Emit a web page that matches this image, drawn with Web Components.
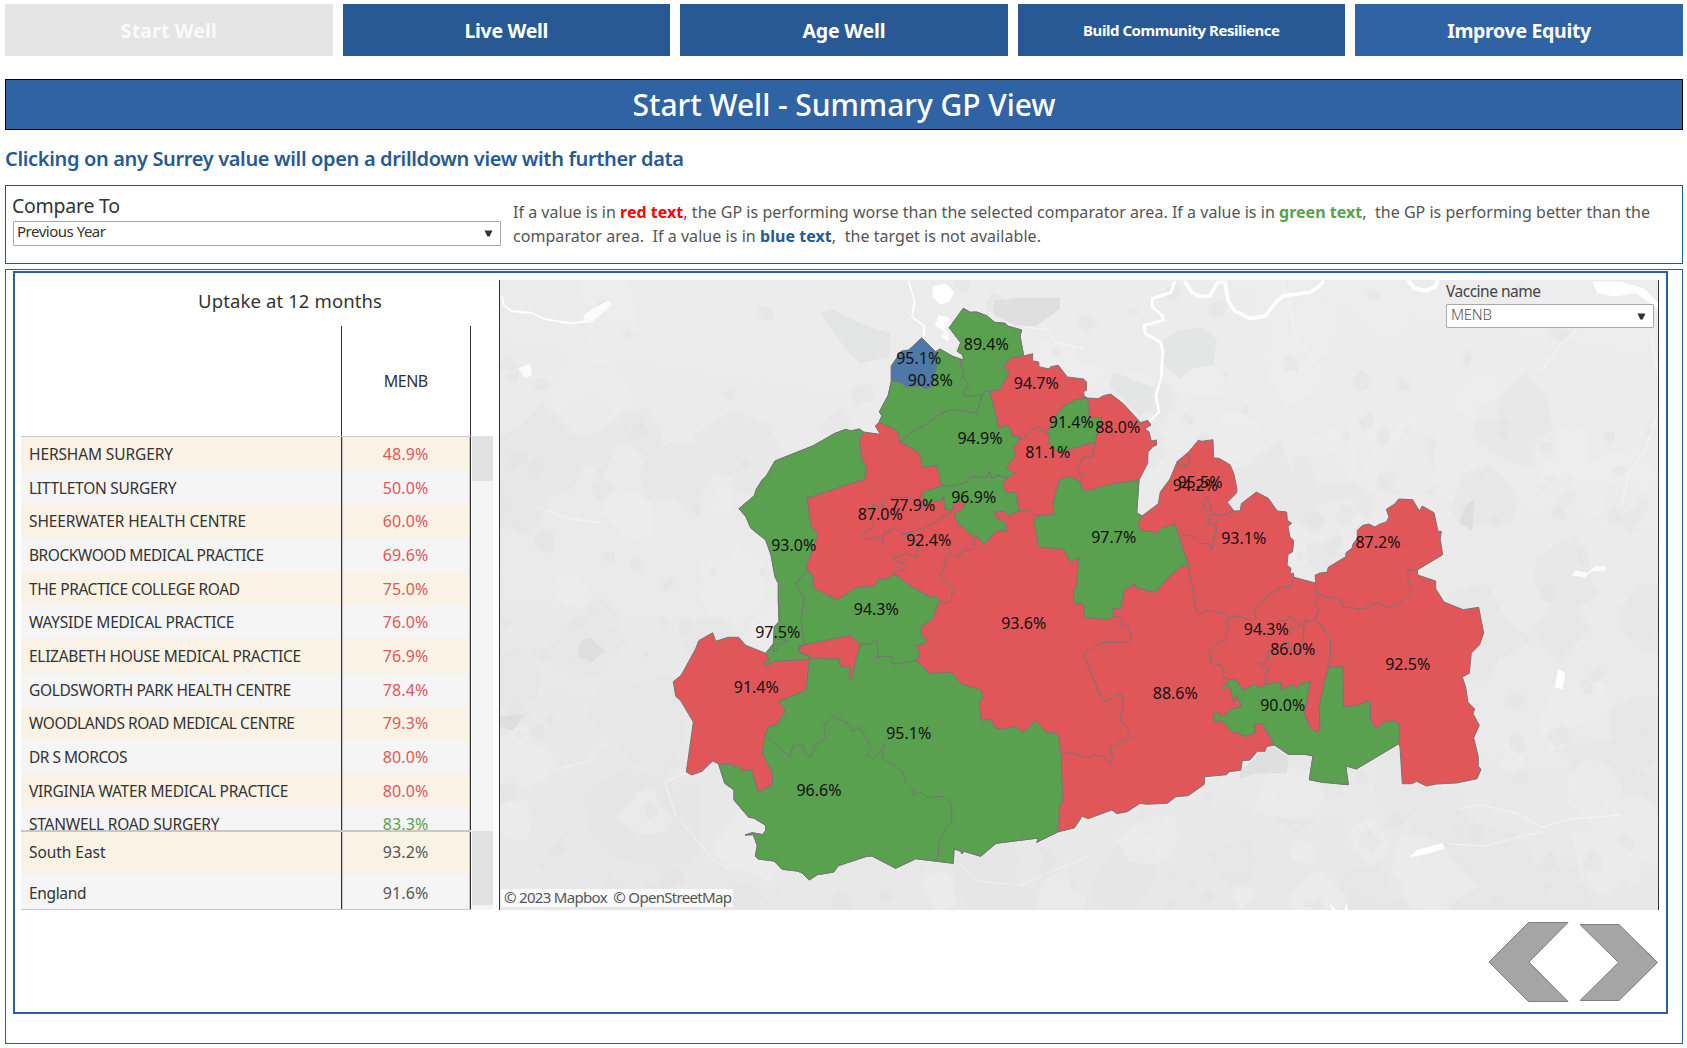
<!DOCTYPE html>
<html lang="en">
<head>
<meta charset="utf-8">
<title>Start Well - Summary GP View</title>
<style>
body{margin:0;background:#fff;font-family:"Noto Sans","Open Sans",sans-serif;color:#333}
</style>
</head>
<body>
<gp-dashboard></gp-dashboard>
<script>
const define = (name, html, setup) => customElements.define(name, class extends HTMLElement {
  connectedCallback() {
    if (this.shadowRoot) return;
    const root = this.attachShadow({ mode: 'open' });
    root.innerHTML = typeof html === 'function' ? html(this) : html;
    if (setup) setup(this, root);
  }
});

/* Text that spaces its letters to span a given width. */
define('fit-text', `<style>:host{display:inline-block;white-space:pre}</style><slot></slot>`, el => {
  const w = +el.getAttribute('w');
  const natural = el.getBoundingClientRect().width;
  const n = el.textContent.length;
  if (w && natural) {
    const s = (w - natural) / (n - 1);
    el.style.letterSpacing = s.toFixed(3) + 'px';
    el.style.marginRight = (-s).toFixed(3) + 'px';
  }
});

define('nav-tab', `<style>
:host{flex:1 1 0;display:flex;align-items:center;justify-content:center;background:#285994;color:#fff;font-size:19.5px;font-weight:700;line-height:20px;padding-top:1px}
:host([off]){background:#e5e5e5;color:#fafafa}
:host([light]){background:#2f63a3}
:host([small]){font-size:15px;padding-top:0}
</style><slot></slot>`);

define('page-title', `<style>
:host{display:flex;box-sizing:border-box;height:51px;margin-top:23px;padding-top:1px;border:1px solid #000;background:#2f63a3;color:#fff;align-items:center;justify-content:center;font-size:30px;font-weight:500;line-height:30px}
</style><slot></slot>`);

define('select-box', `<style>
:host{display:flex;box-sizing:border-box;align-items:center;justify-content:space-between;background:#fff;border:1px solid #a9a9a9;border-radius:1px}
slot{display:block;margin-top:-3px}
svg{display:block;flex:none;margin-right:7px}
</style><div style="margin-top:-2px"><slot></slot></div><svg width="9" height="7" viewBox="0 0 9 7"><path d="M.5.5h8L5.6 6.5H3.4z" fill="#333"/></svg>`);

define('compare-bar', `<style>
:host{display:flex;box-sizing:border-box;height:79px;border:1px solid #125f9b}
.l{width:490px;padding:10px 0 0 6px}
.h{font-size:19.5px;line-height:20px;margin-bottom:5px}
select-box{width:488px;height:25px;font-size:15px;padding-left:3px;margin-left:1px}
.r{padding:14px 0 0 11px;font-size:16px;line-height:24px;color:#555;white-space:nowrap}
b{font-weight:700}
</style>
<div class="l"><div class="h"><fit-text w="108">Compare To</fit-text></div>
<select-box><fit-text w="89">Previous Year</fit-text></select-box></div>
<div class="r"><div><fit-text w="1137">If a value is in <b style="color:#f00">red text</b>, the GP is performing worse than the selected comparator area. If a value is in <b style="color:#59a14f">green text</b>,  the GP is performing better than the</fit-text></div>
<div><fit-text w="528">comparator area.  If a value is in <b style="color:#285994">blue text</b>,  the target is not available.</fit-text></div></div>`);

define('table-row', el => `<style>
:host{display:grid;grid-template-columns:320px 130px;height:33.7px;background:#f5f5f5;font-size:16px;line-height:16px}
:host([odd]){background:#faf3e5}
:host([tall]){height:40.5px}
span{display:flex;align-items:center;padding-left:8px;font-size:15.5px}
b{display:flex;align-items:center;justify-content:center;font-weight:400;box-sizing:border-box;padding-right:1px;border-left:1px solid #333;border-right:1px solid #333;box-shadow:inset 1px 0 #c4c4c4,inset -1px 0 #c4c4c4;color:${el.getAttribute('c')}}
</style><span><fit-text w="${el.getAttribute('w') - 1}">${el.getAttribute('name')}</fit-text></span><b><fit-text w="45.5">${el.getAttribute('v')}</fit-text></b>`);

const R = '#e15759', G = '#59a14f', K = '#555';
const ROWS = [
  ['HERSHAM SURGERY','48.9%',145,R],['LITTLETON SURGERY','50.0%',148.5,R],['SHEERWATER HEALTH CENTRE','60.0%',218,R],
  ['BROCKWOOD MEDICAL PRACTICE','69.6%',236,R],['THE PRACTICE COLLEGE ROAD','75.0%',212,R],['WAYSIDE MEDICAL PRACTICE','76.0%',206.5,R],
  ['ELIZABETH HOUSE MEDICAL PRACTICE','76.9%',273,R],['GOLDSWORTH PARK HEALTH CENTRE','78.4%',263,R],
  ['WOODLANDS ROAD MEDICAL CENTRE','79.3%',267,R],['DR S MORCOS','80.0%',99.5,R],['VIRGINIA WATER MEDICAL PRACTICE','80.0%',260.5,R],
  ['STANWELL ROAD SURGERY','83.3%',191.5,G]];
const TOTALS = [['South East','93.2%',77.5,K],['England','91.6%',58.5,K]];
const rows = (list, extra) => list.map(([n, v, w, c], i) =>
  `<table-row name="${n}" v="${v}" w="${w}" c="${c}" ${extra} ${i % 2 ? '' : 'odd'}></table-row>`).join('');

define('uptake-table', `<style>
:host{display:block;box-sizing:border-box;width:484px;padding-left:6px}
.t{height:53px;padding:2px 0 0 60px;box-sizing:border-box;display:flex;align-items:center;justify-content:center;font-size:18.5px;line-height:18px}
.g{display:flex;gap:1px}
.m{width:450px}
.h{display:grid;grid-template-columns:320px 130px;height:110px;font-size:16px}
.h b{font-weight:400;display:flex;align-items:center;justify-content:center;border-left:1px solid #333;border-right:1px solid #333;box-sizing:border-box}
.body{height:393px;overflow:hidden;border-top:1px solid #c8c8c8}
.foot{height:77px;overflow:hidden;border-top:2px solid #c8c8c8;border-bottom:1px solid #c8c8c8}
.s{width:21px;padding-top:110px}
.s div{background:#f5f5f5}
.s i{display:block;background:#e1e1e1}
</style>
<div class="t"><fit-text w="184">Uptake at 12 months</fit-text></div>
<div class="g"><div class="m"><div class="h"><span></span><b><fit-text w="44.5">MENB</fit-text></b></div>
<div class="body">${rows(ROWS, '')}</div><div class="foot">${rows(TOTALS, 'tall')}</div></div>
<div class="s"><div style="height:395px"><i style="height:45px"></i></div><div style="height:79px"><i style="height:74px"></i></div></div></div>`);

/* Map geometry: each frame is [left, top, x scale, y scale]; a path switches frame by its letter. */
const FRAMES = { A:[660,290,3,3], B:[660,600,3,3], C:[980,290,3,3], D:[1040,560,3,3], E:[1270,470,3,3], F:[496,276,1.3333,2.43] };
function path(src, close) {
  let f, first = true, d = '';
  for (const tok of src.trim().split(/\s+/)) {
    if (FRAMES[tok]) { f = FRAMES[tok]; continue; }
    const [x, y] = tok.split(',').map(Number);
    d += (first ? 'M' : 'L') + (f[0] + x / f[2]).toFixed(1) + ' ' + (f[1] + y / f[3]).toFixed(1);
    first = false;
  }
  return d + (close ? 'Z' : '');
}
const OUTLINE = `A 868,113 910,55 930,67 950,66 980,77 1004,97 1035,100 1045,109 1085,120 1080,138 1091,198
C 158,191 157,212 176,216 177,230 207,237 212,230 235,226 262,261 310,267 320,276 319,302 311,303 312,317 322,324 355,326 370,317 392,312 430,341 482,398 503,391 513,405 494,417 507,425 514,453 529,450 530,465 518,470 504,487 503,520 477,570 470,668 486,678 535,641 541,606 570,567 592,514 625,487 655,451 665,454 699,449 701,504 717,505 750,524 761,550 771,597 770,608 742,637 762,663 781,662 784,641 829,606 865,625 892,663 920,666 922,691 935,700 924,709 930,742 941,751 938,785 924,793 921,825 933,835 930,852 940,849 942,862
E 137,339 135,316 150,309 171,307 175,292 227,260 228,248 246,235 249,222 262,205 262,181 278,166 297,162 314,171 332,161 349,156 357,141 349,118 375,101 386,87 428,89 448,123 457,108 492,128 504,184 514,184 511,208 518,254 442,300 443,315 497,333 497,356 522,396 580,419 626,412 641,489 629,524 604,549 598,610 577,621 587,652 594,697 614,717 609,731 628,766 611,803 625,860 625,889 633,898 621,926 560,939 500,942 469,948 440,934 425,941 397,941 390,832 386,821 259,897 227,886 235,944 155,936 118,929 129,857 105,853 55,853 25,830
D 703,555 680,560 675,574 652,574 630,600 607,602 602,631 567,635 560,644 494,650 493,673 445,707 408,710 382,730 318,733 300,730 262,755 231,761 215,750 145,776 127,769 103,804 53,816
B 1193,696 1130,727 1136,714 1008,730 962,769 912,754 905,762 903,754 882,747 880,790 767,776 707,805 636,768 620,769 535,797 521,816 472,824 448,840 427,819 412,813 366,808 342,783 295,777 286,768 292,737 280,704 255,705 277,698 308,704 318,690 316,675 281,654 266,652 222,600 222,570 194,550 176,492 158,483 126,514 95,525 79,516 100,366 62,302 47,289 40,245 64,225 107,146 116,122 158,98 167,124 204,112 236,112 257,136 317,160 340,131 343,80 357,65 355,0
A 355,880 345,860 333,795 317,750 272,714 258,680 237,656 283,617 289,598 306,571 320,556 345,513 460,467 525,430 558,418 573,423 598,417 611,426 661,433 646,408 657,397 666,377 658,366 685,315 694,274 694,228 724,184 746,180 785,144 827,185 840,177 876,198 911,210 908,195 892,184 902,158`;
const GREENS = [
`A 868,113 910,55 930,67 950,66 980,77 1004,97 1035,100 1045,109 1085,120 1080,138 1091,198 1055,203 1044,213 1030,232 1048,247 1035,270 1019,299 992,303 975,303 966,316 914,319 911,304 926,283 905,257 913,242 900,222 905,210 911,210 908,195 892,184 902,158`,
`A 827,185 840,177 876,198 905,210 900,222 913,242 905,257 926,283 911,304 914,319 966,316 951,370 880,359 845,369 800,402 760,424 720,455 711,422 657,397 666,377 658,366 685,315 694,274 728,240`,
`A 720,455 760,424 800,402 845,369 880,359 951,370 966,316 975,303 990,307 1012,390 1015,416 1041,405 1055,421 1055,437 1080,440 1075,454 1060,474 1066,490 1058,512 1047,517 1040,536 1064,549 1045,563 1010,557 997,566 988,544 981,562 929,562 921,576 886,588 844,586 838,552 828,527 788,532 777,488`,
`A 844,588 886,588 921,576 929,562 981,562 988,544 997,566 1010,557 1045,563 1027,580 1038,606 1068,608 1077,662 1045,677 1032,664 1004,666 1005,680 1034,697 1042,722 1008,723 973,764 952,738 936,738 906,707 893,705 893,692 883,681 884,670 905,660 921,633 882,640 878,660 855,658 851,619 841,633 805,636 795,655 788,607`,
`C 238,571 268,558 300,576 309,600 335,600 380,585 477,570 470,668 486,678 472,704 487,724 516,724 524,733 547,713 586,704 624,822 600,832 563,865 527,907 473,895 464,883 433,900 422,958 401,954 400,977 388,989 312,982 312,946 300,938 289,946 281,928 281,902 292,885 290,868 297,803 270,815 252,778 176,771 161,688 182,676 223,673 219,640`,
`C 322,324 328,360 325,384 366,382 345,456 236,487 206,460 208,434 200,430 229,375 253,347 285,329`,
`A 237,656 283,617 289,598 306,571 320,556 345,513 460,467 525,430 558,418 573,423 598,417 611,426 599,447 602,498 620,533 614,568 560,585 441,625 453,706 473,734 440,828 444,842 407,881 433,927 424,980 B 424,50 428,110 438,134 417,140 417,157 449,168 449,178 345,184 315,199 309,190 327,185 326,175 317,160 340,131 343,80 357,65 355,0 A 355,880 345,860 333,795 317,750 272,714 258,680`,
`A 444,842 460,860 460,893 532,930 590,892 642,889 657,866 675,868 704,853 757,892 816,923 829,918 838,934 828,958 B 818,56 784,80 784,107 800,118 797,130 767,136 780,158 770,182 699,193 695,170 660,170 650,174 656,158 648,119 632,133 600,133 572,105 438,134 428,110 424,50 A 424,980 433,927 407,881`,
`B 449,175 538,177 540,198 572,203 566,234 574,238 600,133 632,133 648,119 656,158 650,174 660,170 695,170 699,193 770,182 808,220 876,218 904,252 962,270 968,293 958,307 962,361 992,358 1006,384 1033,388 1062,379 1090,397 1126,362 1165,402 1168,394 1195,405 D 64,587 68,727 60,732 53,816
B 1193,696 1130,727 1136,714 1008,730 962,769 912,754 905,762 903,754 882,747 880,790 767,776 707,805 636,768 620,769 535,797 521,816 472,824 448,840 427,819 412,813 366,808 342,783 295,777 286,768 292,737 280,704 255,705 277,698 308,704 318,690 316,675 281,654 266,652 222,600 222,570 194,550 176,492 218,494 226,503 234,494 247,514 274,507 295,576 338,554 337,518 306,458 316,405 325,380 350,374 375,334 373,322 354,305 437,271`,
`D 570,359 588,359 609,390 645,373 656,384 678,373 722,366 724,390 758,373 769,389 777,373 811,364 793,462 812,505 832,518 840,510 837,437 865,322 908,320 911,441 952,436 991,421 991,478 1008,507 1032,487 1062,482 1079,495 1076,551 949,627 917,618 925,674 845,667 808,659 819,588 795,583 744,583 703,555 667,491 642,492 648,517 614,530 587,515 576,518 553,490 543,482 524,486 519,462 537,457 538,469 556,466 571,447 605,440 589,405 583,428 570,382 563,377 549,391 546,382`];
const BLUE = `A 694,274 694,228 724,184 746,180 785,144 827,185 833,222 820,262 816,290 798,296 780,288 735,291 728,279`;
const BORDERS = [
`B 316,405 374,458 391,469 398,437 430,434 434,460 452,471 472,430 498,416 490,380 515,347 564,370 578,395 597,382 635,441 620,466 642,476 676,432 664,475 729,513 735,546 761,571 756,585 784,577 800,593 848,588 875,611 875,664 848,702 835,737 837,768 825,784`,
`B 340,131 340,154 352,152 355,130 370,130 383,122 345,116`,
`B 449,175 449,168 417,157 417,140 438,134`,
`A 788,607 775,632 735,622 686,622 668,638 667,652 637,644 642,710 605,734 622,750 648,738 669,757 670,730 686,726 704,712 723,732 760,725 800,711 840,686 880,660`,
`A 723,732 760,735 765,765 778,768 768,803 735,790 708,802 697,797 712,817 730,818 734,836 703,848 704,853`,
`A 952,738 938,750 945,762 938,777 908,781 895,802 870,787 857,808 844,858 883,903 874,916 875,932 858,941 838,934`,
`A 1077,662 1109,660 1122,676 1142,676`,
`C 119,450 150,430 157,415 165,420 172,409 200,430`,
`C 345,456 337,502 312,498 291,538 309,566 300,576`,
`C 592,514 603,529 622,529 630,510 622,489`,
`C 666,635 683,624 698,673 729,676 762,663`,
`C 729,676 705,700 711,718 700,755 697,779 688,761 663,761 633,735 622,738 613,733 602,740`,
`C 666,635 676,655 692,686 680,695 709,714`,
`C 624,822 650,966 D 478,163 502,151 550,160 568,171 597,168 628,180 645,177 648,163 641,150 678,111 718,84 757,76 761,52`,
`D 826,70 829,102 826,118 836,148 824,179 793,184 788,255 780,270 748,265 745,243 720,262 684,275 686,302 656,312 686,329 676,345 680,373`,
`D 829,102 906,122 911,141 970,147 1015,127 1043,145 1080,129 1118,94 1102,52 1105,28 1131,32`,
`D 824,179 850,201 860,224 872,237 871,290 865,322`,
`D 712,185 738,182 750,170 783,196 740,212`,
`D 568,171 557,191 568,203 557,220 557,240 520,257 508,275 515,311 545,315 552,354 570,359`,
`D 218,170 238,170 248,182 236,194 262,198 275,228 270,245 182,248 131,283 184,416 198,424 243,397 251,430 240,475 250,495 262,497 265,518 275,533 209,561 219,593 211,614 195,590 162,584 145,595 87,576 64,587`];
const LABELS = `A 95.1 776,206 90.8 811,272 89.4 979,164 94.7 1129,281 94.9 960,445 96.9 941,623 77.9 758,647 87.0 661,674 92.4 806,752 93.0 401,767 94.3 649,959
B 97.5 353,98 91.4 289,263 93.6 1091,71 95.1 746,401 96.6 477,572 C 91.4 274,398 88.0 413,413 81.1 203,488 95.5 660,578 94.2 646,587 97.7 401,743 93.1 791,746
D 94.3 679,209 86.0 758,269 88.6 406,401 90.0 728,437 92.5 1103,314 E 87.2 324,217`;
function labels() {
  let f, v, out = '';
  for (const t of LABELS.split(/\s+/)) {
    if (FRAMES[t]) f = FRAMES[t];
    else if (t.includes(',')) {
      const [x, y] = t.split(',').map(Number);
      out += `<text x="${(f[0] + x / f[2]).toFixed(1)}" y="${(f[1] + y / f[3] + 5.2).toFixed(1)}">${v}%</text>`;
    } else v = t;
  }
  return out;
}
/* Faint land-cover patches behind the regions, from a fixed seed. */
function terrain() {
  let s = 20231;
  const r = () => (s = (s * 16807) % 2147483647) / 2147483647;
  const blob = (x, y, a) => {
    let d = '';
    const n = 7 + (r() * 4 | 0);
    for (let i = 0; i < n; i++) {
      const t = i / n * 6.283, q = a * (.55 + r() * .6);
      d += (i ? 'L' : 'M') + (x + Math.cos(t) * q).toFixed(0) + ' ' + (y + Math.sin(t) * q).toFixed(0);
    }
    return d + 'Z';
  };
  let big = '', pale = '', small = '';
  for (let i = 0; i < 90; i++) big += blob(500 + r() * 1158, 400 + r() * 520, 16 + r() * 42);
  for (let i = 0; i < 80; i++) pale += blob(500 + r() * 1158, 280 + r() * 630, 12 + r() * 34);
  for (let i = 0; i < 210; i++) small += blob(500 + r() * 1158, 280 + r() * 630, 3 + r() * 9);
  return `<path fill="#e5e5e5" opacity=".45" d="${big}"/><path fill="#eeeeee" opacity=".5" d="${pale}"/><path fill="#dfe2e1" opacity=".45" d="${small}"/>`;
}
const line = (src, w) => `<path fill="none" stroke="#fff" stroke-linejoin="round" stroke-width="${w}" opacity="${w > 1 ? 1 : .55}" d="${path(src)}"/>`;
const area = (src, c) => `<path fill="${c}" d="${path(src, true)}"/>`;

define('gp-map', () => `<style>
:host{display:block;position:relative;box-sizing:border-box;width:1160px;height:630px;margin-top:7px;border-left:1px solid #333;border-right:1px solid #333}
svg{display:block}
text{font-size:16px;text-anchor:middle;fill:#111}
.f{position:absolute;left:946px;top:1px;width:208px}
.f div{font-size:15.5px;line-height:20px;color:#444;margin-bottom:3px}
select-box{height:24px;font-size:15px;font-weight:300;color:#555;padding-left:4px}
.c{position:absolute;left:1px;bottom:3px;height:18px;width:229px;padding-left:3px;background:rgba(255,255,255,.75);font-size:15px;line-height:17px;color:#555}
</style>
<svg width="1158" height="630" viewBox="500 280 1158 630">
<defs><linearGradient id="g" x1="1" y1="0" x2=".7" y2="1"><stop offset="0" stop-color="#ededed"/><stop offset="1" stop-color="#e8e8e8"/></linearGradient></defs>
<rect x="500" y="280" width="1158" height="630" fill="url(#g)"/>${terrain()}
${area('F 664,60 700,52 752,52 752,80 720,122 692,120 664,95', '#dfdfdf')}
${area('F 112,890 125,878 135,895 146,910 128,938 108,925', '#dedede')}
${area('F 5,1070 38,1065 22,1105 5,1095', '#dedede')}
${area('F 1284,600 1292,560 1305,540 1302,620', '#dedede')}
${area('D 600,633 640,600 660,576 700,560 745,592 740,640 650,640 600,655', '#dfdfdf')}
${area('C 545,220 550,150 600,120 670,110 710,150 700,225 640,235 600,265', '#e4e6e5')}
${area('C 390,290 400,245 460,270 520,290 515,350 480,380 430,330', '#e4e6e5')}
${area('A 480,70 520,60 600,100 690,130 690,200 600,220 560,180', '#e3e5e4')}
${area('F 582,25 600,18 611,40 604,62 592,70 582,50', '#fff')}
${area('F 590,95 604,100 608,120 598,125 604,140 603,160 594,150 598,135 585,120', '#fdfdfd')}
${area('F 1462,14 1500,14 1530,30 1556,75 1556,90 1520,42 1490,50 1468,40', '#fff')}
${area('F 115,115 118,92 150,58 155,70 128,112', '#fbfbfb')}
${area('F 30,225 46,212 48,240 38,248', '#fbfbfb')}
${area('F 1412,1000 1416,955 1426,965 1422,1005', '#fdfdfd')}
${area('F 1218,1412 1228,1395 1262,1378 1264,1392 1240,1405', '#fff')}
${area('F 1434,728 1440,715 1455,722 1466,705 1481,706 1478,718 1462,716 1452,732', '#fbfbfb')}
${area('F 1112,1525 1125,1550 1115,1548', '#fff')}${area('F 1130,1550 1134,1520 1136,1548', '#fff')}
${line('F 905,12 900,40 875,55 875,75 888,95 890,108 864,120 866,140 885,160 889,180 887,245', 3)}
${line('F 887,245 880,290 884,330 870,356', 2.2)}
${line('F 918,12 928,40 938,50 952,48 962,15 972,15 976,60 985,85 1005,103 1025,98 1042,60 1050,48 1084,40 1094,30 1104,12', 3.6)}
${line('F 1216,10 1224,30 1240,36 1252,26 1256,10', 4)}
${line('F 8,50 10,70 20,85 48,90 65,105 100,115 120,110', 1.8)}
${line('F 570,150 571,122 555,100 558,60 550,12', 1.6)}
${line('F 704,125 735,130 745,160 785,178', 1)}
${line('F 1048,12 1060,80 1065,150 1082,190 1105,240', .8)}
${line('F 1540,110 1510,80 1460,100 1420,165 1395,230', 1)}
${line('F 1540,150 1556,300 1530,430 1510,480 1500,560', 1)}
${line('F 1285,1295 1310,1285 1360,1305 1395,1340 1430,1320 1500,1310', .9)}
${line('F 1270,1380 1320,1385 1370,1360 1395,1350', .9)}
${line('F 50,560 100,590 140,600', .9)}${line('F 275,1190 225,1230 240,1310 290,1420 310,1440', .9)}
${line('F 150,1130 120,1180 80,1200', .8)}${line('F 620,1430 640,1470 700,1480 790,1410', .7)}
<g stroke="#767676" stroke-width="1" stroke-linejoin="round">
<path fill="${R}" d="${path(OUTLINE, true)}"/>
${GREENS.map(g => `<path fill="${G}" d="${path(g, true)}"/>`).join('')}
<path fill="#4e79a7" d="${path(BLUE, true)}"/>
<path fill="none" d="${BORDERS.map(b => path(b)).join('')}"/></g>
${labels()}</svg>
<div class="f"><div><fit-text w="95">Vaccine name</fit-text></div><select-box><fit-text w="41">MENB</fit-text></select-box></div>
<div class="c"><fit-text w="228">© 2023 Mapbox  © OpenStreetMap</fit-text></div>`);

define('page-arrows', `<style>:host{display:flex;justify-content:flex-end;padding:12px 7px 0 0}svg{display:block}</style>
<svg width="171" height="81" viewBox="1488 922 171 81" fill="#a5a5a5" stroke="#7f7f7f"><path d="M1489 962L1528.5 922.5H1568L1529 962L1568 1001.5H1528.5Z"/><path d="M1580 924.5H1619L1657.5 962.5L1619 1000.5H1580L1618.5 962.5Z"/></svg>`);

define('data-panel', `<style>
:host{display:block;box-sizing:border-box;height:775px;margin-top:5px;border:1px solid #2960a3;padding:1px 0 0 7px}
.in{box-sizing:border-box;width:1655px;height:743px;border:2px solid #2960a3}
.row{display:flex;height:637px}
</style><div class="in"><div class="row"><uptake-table></uptake-table><gp-map></gp-map></div><page-arrows></page-arrows></div>`);

define('gp-dashboard', `<style>
:host{display:block;width:1678px;padding:4px 0 0 5px}
nav{display:flex;gap:10px;height:52px}
nav-tab{box-sizing:border-box}
.s{height:55px;box-sizing:border-box;padding-top:3px;display:flex;align-items:center;font-size:20px;font-weight:600;line-height:20px;color:#285994}
</style>
<nav><nav-tab off><fit-text w="96">Start Well</fit-text></nav-tab><nav-tab><fit-text w="84">Live Well</fit-text></nav-tab><nav-tab><fit-text w="83">Age Well</fit-text></nav-tab><nav-tab small><fit-text w="197">Build Community Resilience</fit-text></nav-tab><nav-tab light><fit-text w="144">Improve Equity</fit-text></nav-tab></nav>
<page-title><fit-text w="423">Start Well - Summary GP View</fit-text></page-title>
<div class="s"><fit-text w="679">Clicking on any Surrey value will open a drilldown view with further data</fit-text></div>
<compare-bar></compare-bar>
<data-panel></data-panel>`);
</script>
</body>
</html>
